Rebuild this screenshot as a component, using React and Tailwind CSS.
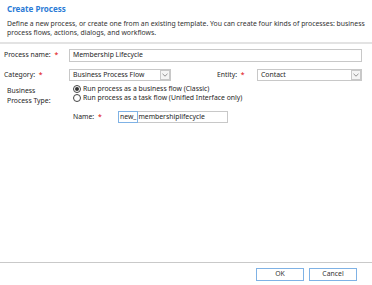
export default function App() {
  return (
    <div className="w-[372px] h-[285px] bg-white flex flex-col text-[#262626] font-['Noto_Sans',sans-serif] overflow-hidden">
      <div className="px-[7px] pt-[4px]">
        <div className="text-[8px] leading-[10px] font-bold text-[#2b7bd6]">Create Process</div>
        <div className="mt-[5px] text-[6.85px] leading-[9px] text-[#333]">
          Define a new process, or create one from an existing template. You can create four kinds of processes: business
          <br />
          process flows, actions, dialogs, and workflows.
        </div>
      </div>
      <div className="mt-[5px] h-[2px] bg-[#e3e3e3]" />
      <div className="flex flex-col text-[6.85px]">
        <div className="flex items-center mt-[5px] h-[13px]">
          <div className="w-[69px] pl-[4px] shrink-0">Process name: <span className="text-[#d00] ml-[2px]">*</span></div>
          <div className="w-[293px] h-[13px] border border-[#c8c8c8] flex items-center px-[3px]">Membership Lifecycle</div>
        </div>
        <div className="flex items-center mt-[7px] h-[12px]">
          <div className="w-[69px] pl-[4px] shrink-0">Category: <span className="text-[#d00] ml-[2px]">*</span></div>
          <div className="w-[102px] h-[12px] border border-[#c8c8c8] flex items-center pl-[3px]">
            <span className="flex-1">Business Process Flow</span>
            <span className="w-[10px] h-[10px] border border-[#c8c8c8] bg-[#f4f4f4] flex items-center justify-center">
              <svg width="6" height="4" viewBox="0 0 6 4"><path d="M0.5 0.8 L3 3.2 L5.5 0.8" fill="none" stroke="#777" strokeWidth="0.8" /></svg>
            </span>
          </div>
          <div className="w-[86px] pl-[46px] shrink-0">Entity: <span className="text-[#d00] ml-[2px]">*</span></div>
          <div className="w-[105px] h-[12px] border border-[#c8c8c8] flex items-center pl-[3px]">
            <span className="flex-1">Contact</span>
            <span className="w-[10px] h-[10px] border border-[#c8c8c8] bg-[#f4f4f4] flex items-center justify-center">
              <svg width="6" height="4" viewBox="0 0 6 4"><path d="M0.5 0.8 L3 3.2 L5.5 0.8" fill="none" stroke="#777" strokeWidth="0.8" /></svg>
            </span>
          </div>
        </div>
        <div className="flex mt-[3px]">
          <div className="w-[69px] pl-[7px] shrink-0 leading-[9.5px] pt-[2px]">Business<br />Process Type:</div>
          <div className="flex flex-col pl-[4px] leading-[9px]">
            <label className="flex items-center gap-[2px]">
              <span className="w-[8px] h-[8px] rounded-full border border-[#444] flex items-center justify-center">
                <span className="w-[4px] h-[4px] rounded-full bg-[#333]" />
              </span>
              <span>Run process as a business flow (Classic)</span>
            </label>
            <label className="flex items-center gap-[2px]">
              <span className="w-[8px] h-[8px] rounded-full border border-[#444]" />
              <span>Run process as a task flow (Unified Interface only)</span>
            </label>
          </div>
        </div>
        <div className="flex items-center mt-[6px] h-[12px]">
          <div className="w-[118px] pl-[73px] shrink-0">Name: <span className="text-[#d00] ml-[2px]">*</span></div>
          <div className="w-[110px] h-[12px] border border-[#c8c8c8] flex items-stretch">
            <span className="border border-[#7fb2e5] px-[1px] flex items-center -m-[1px]">new_</span>
            <span className="flex items-center pl-[1px]">membershiplifecycle</span>
          </div>
        </div>
      </div>
      <div className="flex-1" />
      <div className="h-[1px] bg-[#c9c9c9]" />
      <div className="flex justify-end gap-[5px] pr-[15px] pt-[5px] pb-[4px] text-[6.85px]">
        <button className="w-[48px] h-[13px] border border-[#7fb2e5] bg-white text-[#333] flex items-center justify-center">OK</button>
        <button className="w-[48px] h-[13px] border border-[#7fb2e5] bg-white text-[#333] flex items-center justify-center">Cancel</button>
      </div>
    </div>
  );
}
